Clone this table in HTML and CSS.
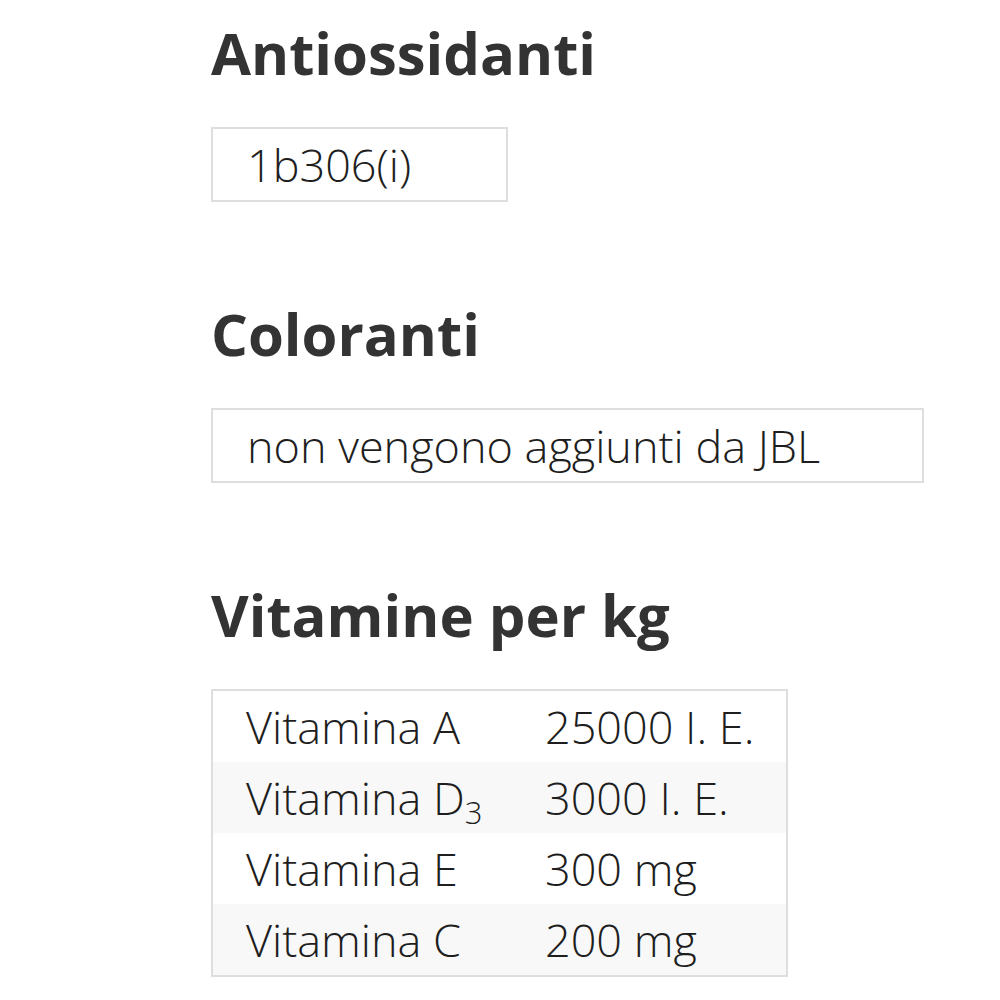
FILE: index.html
```html
<!DOCTYPE html>
<html lang="it">
<head>
<meta charset="utf-8">
<title>Antiossidanti, Coloranti, Vitamine</title>
<link rel="stylesheet" href="styles.css">
</head>
<body>
<main class="page">
  <section class="block">
    <h2 class="title">Antiossidanti</h2>
    <div class="value value-short">1b306(i)</div>
  </section>
  <section class="block">
    <h2 class="title">Coloranti</h2>
    <div class="value value-long">non vengono aggiunti da JBL</div>
  </section>
  <section class="block">
    <h2 class="title">Vitamine per kg</h2>
    <table class="vit">
      <tbody>
        <tr><td class="name">Vitamina A</td><td class="amt">25000 I. E.</td></tr>
        <tr><td class="name">Vitamina D<sub>3</sub></td><td class="amt">3000 I. E.</td></tr>
        <tr><td class="name">Vitamina E</td><td class="amt">300 mg</td></tr>
        <tr><td class="name">Vitamina C</td><td class="amt">200 mg</td></tr>
      </tbody>
    </table>
  </section>
</main>
</body>
</html>
```

FILE: styles.css
```css
html, body {
  margin: 0;
  padding: 0;
  background: #fff;
}

.page {
  padding: 17px 0 0 211px;
  font-family: "Open Sans", "Liberation Sans", sans-serif;
  color: #2b2b2b;
}

.block {
  margin-bottom: 96px;
}

.block:last-child {
  margin-bottom: 0;
}

.title {
  margin: 0 0 38px 0;
  font-size: 58px;
  line-height: 72px;
  font-weight: 700;
  color: #333;
}

.value {
  box-sizing: border-box;
  border: 2px solid #dedede;
  padding: 0 0 0 34px;
  font-size: 45px;
  line-height: 71px;
  font-weight: 300;
  color: #1e1e1e;
}

.value-short { width: 297px; }
.value-long { width: 713px; }

.vit {
  border-collapse: collapse;
  border: 2px solid #dedede;
  width: 577px;
  font-size: 45px;
  font-weight: 300;
  color: #1e1e1e;
}

.vit td {
  padding: 0 0 0 33px;
  height: 71px;
  line-height: 71px;
  vertical-align: top;
  white-space: nowrap;
}

.vit td.name { width: 266px; }

.vit tr:nth-child(even) td { background: #f8f8f8; }

.vit sub {
  font-size: 31px;
  line-height: 0;
  vertical-align: -9px;
}
```
